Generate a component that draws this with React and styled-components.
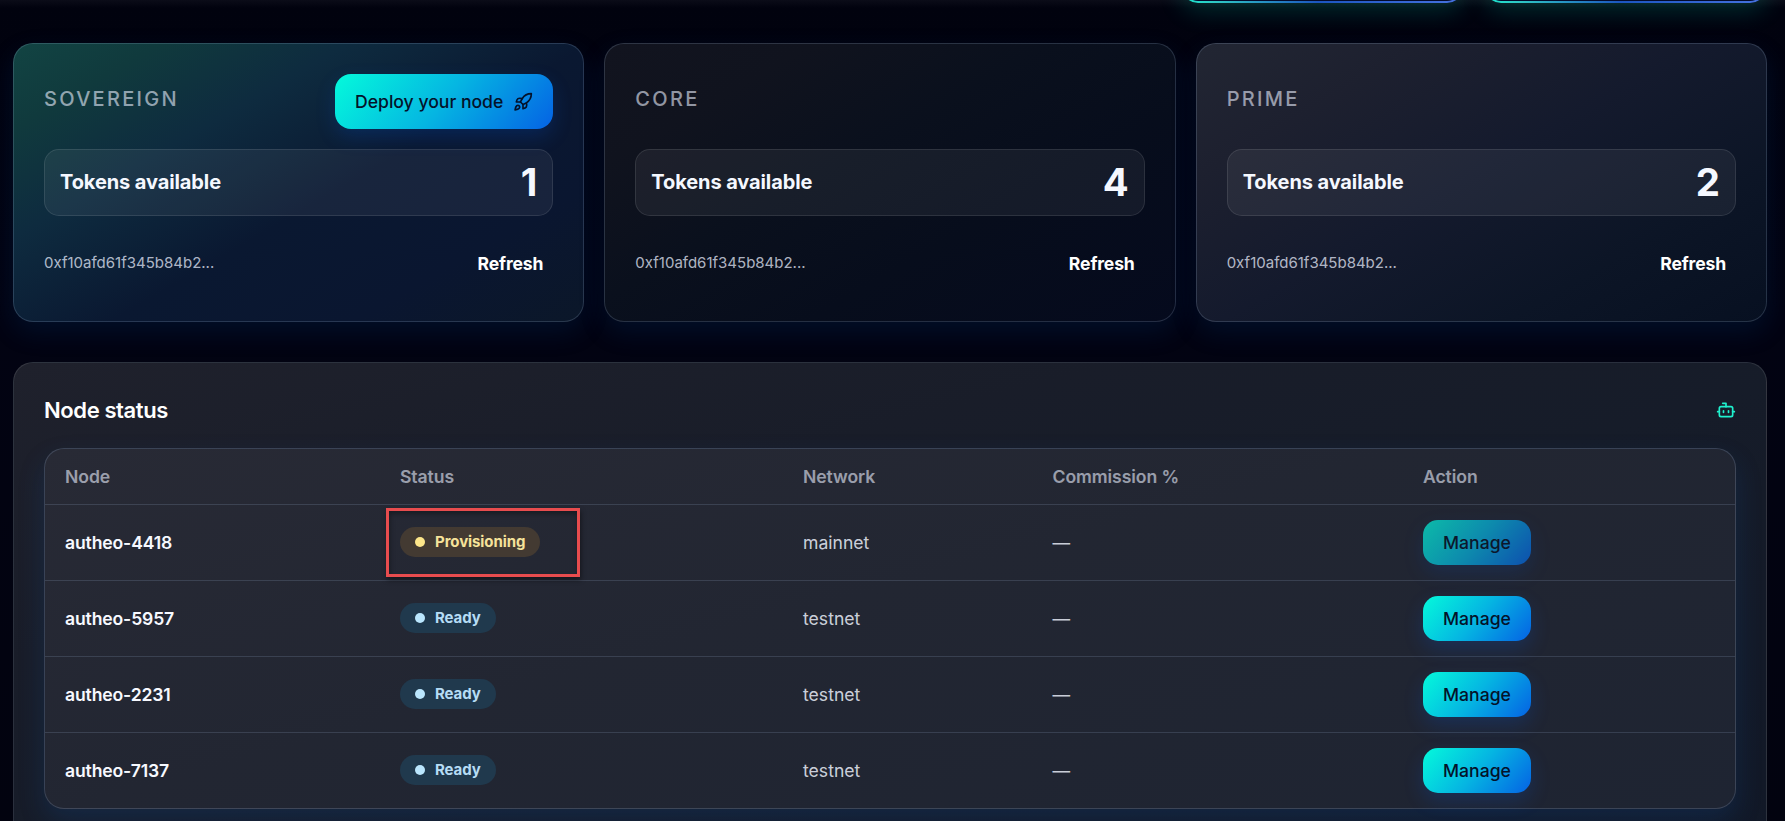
import React from "react";
import styled, { createGlobalStyle, css } from "styled-components";
import { Rocket, Bot } from "lucide-react";

const GlobalStyle = createGlobalStyle`
  * { box-sizing: border-box; }
  html, body { margin: 0; padding: 0; background: #02030f; }
  body { font-family: Inter, "Liberation Sans", sans-serif; color: #f5f8ff; overflow: hidden; }
  button { font: inherit; border: 0; margin: 0; cursor: pointer; }
`;

const Page = styled.main`
  height: 821px;
  overflow: hidden;
  padding: 0 18px 0 13px;
  background:
    linear-gradient(180deg, #0b0c18 0, rgba(11, 12, 24, 0) 8px),
    linear-gradient(180deg, #01020e 0%, #020312 40%, #02030f 100%);
`;

const Toolbar = styled.header`
  display: flex;
  justify-content: flex-end;
  align-items: flex-end;
  gap: 22px;
  height: 3px;
  margin-bottom: 40px;
  padding-right: 1px;
`;

const OutlineButton = styled.button`
  flex: none;
  width: 281px;
  height: 54px;
  border: 2px solid transparent;
  border-radius: 16px;
  background:
    linear-gradient(#030b2c, #030b2c) padding-box,
    linear-gradient(100deg, #14f1d0 0%, #2fc7c4 15%, #1c55c0 50%, #4773e0 100%) border-box;
  box-shadow: 0 8px 24px rgba(0, 255, 210, 0.17);
`;

const Cards = styled.section`
  display: grid;
  grid-template-columns: repeat(3, 1fr);
  gap: 20px;
`;

const cardTones = {
  sovereign: "linear-gradient(150deg, #124443 0%, #103a3d 14%, #0e2b3f 32%, #0a1831 55%, #0a1630 78%, #0b1729 100%)",
  core: "linear-gradient(150deg, #12141f 0%, #10131e 20%, #0a101d 42%, #070d1c 65%, #050a1d 100%)",
  prime: "linear-gradient(150deg, #222633 0%, #1d202f 22%, #141a2d 48%, #0c1526 75%, #071021 100%)",
};

const Card = styled.article`
  height: 279px;
  padding: 30px;
  border: 1px solid rgba(190, 220, 255, 0.17);
  border-radius: 20px;
  background: ${(p) => cardTones[p.$tone]};
  background-origin: border-box;
  box-shadow: 0 10px 26px rgba(0, 66, 130, 0.2);
`;

const CardHead = styled.div`
  display: flex;
  justify-content: space-between;
  align-items: flex-start;
  height: 55px;
  margin-bottom: 20px;
`;

const Tier = styled.h2`
  margin: 12px 0 0;
  font-size: 20px;
  font-weight: 500;
  line-height: 26px;
  letter-spacing: 2.3px;
  color: rgba(235, 240, 255, 0.6);
`;

const gradientFill = css`
  background: linear-gradient(130deg, #04fadb 0%, #05b5e2 50%, #0562e4 100%);
  color: #04122a;
  box-shadow: 0 8px 20px rgba(0, 98, 255, 0.18);
`;

const DeployButton = styled.button`
  ${gradientFill}
  display: flex;
  align-items: center;
  gap: 10px;
  height: 55px;
  padding: 0 20px;
  border-radius: 16px;
  font-size: 17.6px;
  font-weight: 550;
`;

const TokenBox = styled.div`
  display: flex;
  justify-content: space-between;
  align-items: center;
  height: 67px;
  padding: 0 15px 2px;
  border: 1px solid rgba(255, 255, 255, 0.1);
  border-radius: 15px;
  background: rgba(255, 255, 255, 0.06);
`;

const TokenLabel = styled.span`
  font-size: 20px;
  font-weight: 650;
  letter-spacing: -0.1px;
`;

const TokenCount = styled.strong`
  padding-top: 1px;
  font-size: 38.4px;
  font-weight: 700;
  line-height: 1;
`;

const CardFoot = styled.div`
  display: flex;
  justify-content: space-between;
  align-items: center;
  margin-top: 32px;
  height: 32px;
`;

const Address = styled.span`
  padding-bottom: 3px;
  font-size: 15px;
  color: rgba(235, 240, 255, 0.74);
`;

const Refresh = styled.button`
  padding: 0 10px 2px;
  background: none;
  font-size: 17.6px;
  font-weight: 650;
  letter-spacing: -0.15px;
  color: #fff;
`;

const Panel = styled.section`
  height: 520px;
  margin-top: 40px;
  padding: 30px;
  border: 1px solid rgba(255, 255, 255, 0.1);
  border-radius: 20px;
  background: linear-gradient(165deg, #1f212c 0%, #191d29 30%, #161c29 50%, #111827 100%);
`;

const PanelHead = styled.div`
  display: flex;
  justify-content: space-between;
  align-items: center;
  height: 34px;
  margin-bottom: 21px;
  color: #1ff0cd;
`;

const PanelTitle = styled.h3`
  margin: 0;
  font-size: 22px;
  font-weight: 600;
  letter-spacing: -0.4px;
  color: #fff;
`;

const Table = styled.div`
  border: 1px solid rgba(160, 190, 230, 0.2);
  border-radius: 20px;
  background: linear-gradient(165deg, #282a35 0%, #222632 45%, #1e2432 100%);
  box-shadow: 0 12px 26px rgba(20, 80, 160, 0.22);
`;

const Row = styled.div`
  display: grid;
  grid-template-columns: 335px 403px 249.5px 370.5px 1fr;
  align-items: center;
  height: ${(p) => (p.$head ? 55 : 76)}px;
  padding-left: 20px;
  font-size: 17.6px;
  font-weight: ${(p) => (p.$head ? 560 : 420)};
  letter-spacing: ${(p) => (p.$head ? -0.08 : 0)}px;
  color: ${(p) => (p.$head ? "rgba(235, 240, 255, 0.6)" : "rgba(240, 244, 255, 0.84)")};
  & + & { border-top: 1px solid rgba(170, 195, 230, 0.17); }
`;

const NodeName = styled.span`
  font-weight: 640;
  letter-spacing: -0.15px;
  color: #f7f9ff;
`;

const statusTones = {
  Provisioning: { fill: "#433a32", dot: "#fde68a", text: "#f6e39a" },
  Ready: { fill: "#20394d", dot: "#bae6fd", text: "#b5dcf5" },
};

const Badge = styled.span`
  display: inline-flex;
  align-items: center;
  gap: 10px;
  height: 30px;
  padding: 0 15px;
  border-radius: 15px;
  background: ${(p) => statusTones[p.$status].fill};
  color: ${(p) => statusTones[p.$status].text};
  font-size: 15px;
  font-weight: 650;
  letter-spacing: -0.08px;
  &::before {
    content: "";
    width: 10px;
    height: 10px;
    border-radius: 50%;
    background: ${(p) => statusTones[p.$status].dot};
  }
`;

const StatusCell = styled.div`
  position: relative;
  display: flex;
  padding-bottom: 2px;
`;

const Highlight = styled.div`
  position: absolute;
  left: -14px;
  top: -19px;
  width: 194px;
  height: 69px;
  border: 3px solid #e84c4e;
  box-shadow: 1px 3px 5px rgba(0, 0, 0, 0.45), inset 1px 3px 5px rgba(0, 0, 0, 0.35);
`;

const ManageButton = styled.button`
  ${gradientFill}
  display: block;
  width: 108px;
  height: 45px;
  padding: 0;
  border-radius: 15px;
  font-weight: 550;
  opacity: ${(p) => (p.disabled ? 0.7 : 1)};
`;

const cards = [
  { tone: "sovereign", tier: "SOVEREIGN", count: 1, deploy: true },
  { tone: "core", tier: "CORE", count: 4 },
  { tone: "prime", tier: "PRIME", count: 2 },
];

const nodes = [
  { name: "autheo-4418", status: "Provisioning", network: "mainnet", marked: true },
  { name: "autheo-5957", status: "Ready", network: "testnet" },
  { name: "autheo-2231", status: "Ready", network: "testnet" },
  { name: "autheo-7137", status: "Ready", network: "testnet" },
];

export default function App() {
  return (
    <Page>
      <GlobalStyle />
      <Toolbar>
        <OutlineButton />
        <OutlineButton />
      </Toolbar>
      <Cards>
        {cards.map((c) => (
          <Card key={c.tier} $tone={c.tone}>
            <CardHead>
              <Tier>{c.tier}</Tier>
              {c.deploy && (
                <DeployButton>
                  Deploy your node
                  <Rocket size={20} strokeWidth={2} />
                </DeployButton>
              )}
            </CardHead>
            <TokenBox>
              <TokenLabel>Tokens available</TokenLabel>
              <TokenCount>{c.count}</TokenCount>
            </TokenBox>
            <CardFoot>
              <Address>0xf10afd61f345b84b2...</Address>
              <Refresh>Refresh</Refresh>
            </CardFoot>
          </Card>
        ))}
      </Cards>
      <Panel>
        <PanelHead>
          <PanelTitle>Node status</PanelTitle>
          <Bot size={20} />
        </PanelHead>
        <Table>
          <Row $head>
            <span>Node</span>
            <span>Status</span>
            <span>Network</span>
            <span>Commission %</span>
            <span>Action</span>
          </Row>
          {nodes.map((n) => (
            <Row key={n.name}>
              <NodeName>{n.name}</NodeName>
              <StatusCell>
                <Badge $status={n.status}>{n.status}</Badge>
                {n.marked && <Highlight />}
              </StatusCell>
              <span>{n.network}</span>
              <span>—</span>
              <div>
                <ManageButton disabled={n.status === "Provisioning"}>Manage</ManageButton>
              </div>
            </Row>
          ))}
        </Table>
      </Panel>
    </Page>
  );
}
